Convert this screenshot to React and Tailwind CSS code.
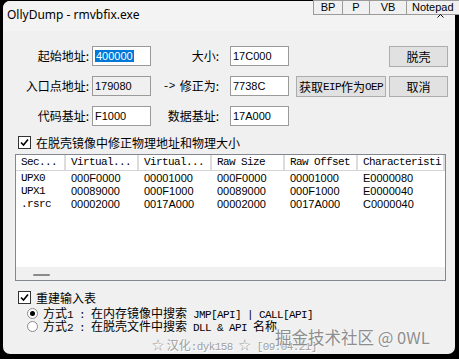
import React from 'react';

const cjk = "font-['Noto_Sans_CJK_SC',sans-serif]";
const mono = "font-['Liberation_Mono',monospace] text-[11px] tracking-[-0.6px]";
const sans = "font-['Liberation_Sans',sans-serif] text-[11px]";

const sections = [
  ['UPX0', '000F0000', '00001000', '000F0000', '00001000', 'E0000080'],
  ['UPX1', '00089000', '000F1000', '00089000', '000F1000', 'E0000040'],
  ['.rsrc', '00002000', '0017A000', '00002000', '0017A000', 'C0000040'],
];

const columns = [
  { title: 'Sec...', w: 'w-[50px]' },
  { title: 'Virtual...', w: 'w-[73px]' },
  { title: 'Virtual...', w: 'w-[73px]' },
  { title: 'Raw Size', w: 'w-[73px]' },
  { title: 'Raw Offset', w: 'w-[73px]' },
  { title: 'Characteristi', w: 'w-[87px]' },
];

const Label = ({ w, children }) => (
  <div className={`${w} h-[20px] flex items-center justify-end text-[12px] leading-[14px] text-black whitespace-nowrap`}>
    {children}
  </div>
);

const Field = ({ value, disabled, selected, className = '' }) => (
  <div
    className={`${className} w-[59px] h-[20px] border border-[#9a9a9a] flex items-center pl-[2px] ${
      disabled ? 'bg-[#f0f0f0]' : 'bg-white'
    } ${sans}`}
  >
    {selected ? (
      <span className="bg-[#0078d7] text-white leading-[12px] px-[1px]">{value}</span>
    ) : (
      <span className="text-black">{value}</span>
    )}
  </div>
);

const Button = ({ className = '', children }) => (
  <div
    className={`${className} h-[21px] flex items-center justify-center bg-[#e1e1e1] border border-[#adadad] text-[12px] leading-[14px] text-black whitespace-nowrap`}
  >
    {children}
  </div>
);

const CheckBox = () => (
  <div className="w-[13px] h-[13px] shrink-0 border border-[#333] bg-white flex items-center justify-center">
    <svg width="9" height="9" viewBox="0 0 9 9">
      <path d="M1 4.5 L3.5 7 L8 1.5" fill="none" stroke="#000" strokeWidth="1.6" />
    </svg>
  </div>
);

const Radio = ({ checked }) => (
  <div className="w-[11px] h-[11px] shrink-0 rounded-full border border-[#8a8a8a] bg-white flex items-center justify-center">
    {checked && <div className="w-[5px] h-[5px] rounded-full bg-black" />}
  </div>
);

export default function App() {
  return (
    <div className={`relative w-[459px] h-[359px] bg-black overflow-hidden ${cjk}`}>
      <div className="relative ml-[3px] mt-[1px] w-[452px] h-[353px] rounded-[7px] bg-[#f0f0f0] flex flex-col overflow-hidden">
        {/* title bar */}
        <div className="h-[30px] shrink-0 bg-[#f3f3f3] pl-[4px] pt-[6px] text-[12px] text-black font-['Noto_Sans',sans-serif] leading-[16px]">
          OllyDump - rmvbfix.exe
        </div>

        {/* address rows */}
        <div className="flex flex-col gap-[9px] mt-[15px]">
          <div className="flex items-start h-[21px]">
            <Label w="w-[86px]">起始地址:</Label>
            <Field className="ml-[3px]" value="400000" selected />
            <Label w="w-[68px]">大小:</Label>
            <Field className="ml-[11px]" value="17C000" />
            <Button className="ml-[100px] w-[59px]">脱壳</Button>
          </div>
          <div className="flex items-start h-[21px]">
            <Label w="w-[86px]">入口点地址:</Label>
            <Field className="ml-[3px]" value="179080" disabled />
            <Label w="w-[68px]">
              <span className={`${mono} mr-[5px]`}>-&gt;</span>修正为:
            </Label>
            <Field className="ml-[11px]" value="7738C" />
            <Button className="ml-[7px] w-[90px]">
              获取<span className={mono}>EIP</span>作为<span className={mono}>OEP</span>
            </Button>
            <Button className="ml-[3px] w-[59px]">取消</Button>
          </div>
          <div className="flex items-start h-[21px]">
            <Label w="w-[86px]">代码基址:</Label>
            <Field className="ml-[3px]" value="F1000" />
            <Label w="w-[68px]">数据基址:</Label>
            <Field className="ml-[11px]" value="17A000" />
          </div>
        </div>

        {/* fix checkbox */}
        <div className="flex items-center h-[13px] mt-[9px] ml-[15px] gap-[5px] text-[12px] leading-[13px] text-black shrink-0">
          <CheckBox />
          <span className="whitespace-nowrap">在脱壳镜像中修正物理地址和物理大小</span>
        </div>

        {/* section table */}
        <div className="mt-[5px] ml-[12px] w-[431px] h-[127px] border border-[#828790] bg-white flex flex-col shrink-0">
          <div className="flex h-[16px] border-b border-[#d5d5d5] shrink-0">
            {columns.map((c, i) => (
              <div
                key={i}
                className={`${c.w} h-full border-r-2 border-[#dcdcdc] pl-[5px] flex items-center text-black ${mono} whitespace-nowrap overflow-hidden`}
              >
                {c.title}
              </div>
            ))}
          </div>
          <div className="flex-1 flex flex-col pt-[1px]">
            {sections.map((row, r) => (
              <div key={r} className="flex h-[13px] items-center">
                {row.map((cell, i) => (
                  <div
                    key={i}
                    className={`${columns[i].w} pl-[5px] leading-[13px] text-black ${
                      i === 0 ? mono : sans
                    }`}
                  >
                    {cell}
                  </div>
                ))}
              </div>
            ))}
          </div>
          <div className="h-[13px] bg-[#f0f0f0] shrink-0 relative">
            <div className="absolute left-[17px] top-[7px] w-[17px] h-[2px] bg-[#8a8a8a] rounded-full" />
          </div>
        </div>

        {/* import rebuild */}
        <div className="flex items-center h-[13px] mt-[10px] ml-[15px] gap-[5px] text-[12px] leading-[13px] text-black shrink-0">
          <CheckBox />
          <span>重建输入表</span>
        </div>
        <div className="flex flex-col ml-[24px] mt-[3px] text-[12px] leading-[13px] text-black shrink-0">
          <div className="flex items-center h-[13px] gap-[5px]">
            <Radio checked />
            <span className="whitespace-nowrap">
              方式<span className={mono}>1 : </span>在内存镜像中搜索<span className={mono}> JMP[API] | CALL[API]</span>
            </span>
          </div>
          <div className="flex items-center h-[13px] gap-[5px]">
            <Radio />
            <span className="whitespace-nowrap">
              方式<span className={mono}>2 : </span>在脱壳文件中搜索<span className={mono}> DLL &amp; API </span>名称
            </span>
          </div>
        </div>
        <div className="ml-[149px] mt-[5px] h-[14px] text-[12px] leading-[14px] text-[#a0a0a0] whitespace-nowrap [text-shadow:1px_1px_0_#ffffff] shrink-0">
          ☆ 汉化<span className={mono}>:dyk158 </span>☆<span className={mono}> [09.04.21]</span>
        </div>

        {/* watermark */}
        <div className="absolute left-[272px] top-[326px] text-[16.5px] leading-[20px] text-[#8e8e8e] whitespace-nowrap [text-shadow:0_0_2px_#ffffff]">
          掘金技术社区 @ 0WL
        </div>
      </div>

      {/* toolbar of the parent window */}
      <div className="absolute left-[313px] top-0 flex h-[15px] font-['Liberation_Sans',sans-serif] text-[11px] leading-[13px] text-black">
        <div className="w-[30px] border border-[#9a9a9a] bg-[#f0f0f0] text-center">BP</div>
        <div className="w-[27px] border border-l-0 border-[#9a9a9a] bg-[#f0f0f0] text-center">P</div>
        <div className="w-[37px] border border-l-0 border-[#9a9a9a] bg-[#f0f0f0] text-center">VB</div>
        <div className="w-[60px] border border-l-0 border-[#9a9a9a] bg-[#f0f0f0] pl-[5px]">Notepad</div>
      </div>
      <svg className="absolute left-[437px] top-[14px]" width="7" height="4" viewBox="0 0 7 4">
        <path d="M0.5 3.5 L3.5 0.5 L6.5 3.5" fill="none" stroke="#000" strokeWidth="1" />
      </svg>
    </div>
  );
}
